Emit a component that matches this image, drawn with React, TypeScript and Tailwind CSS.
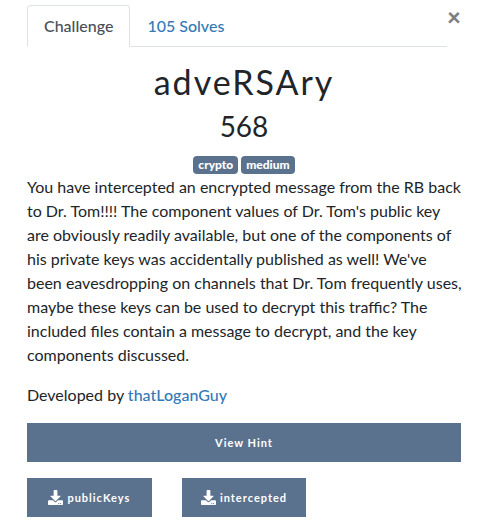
import { FaDownload } from "react-icons/fa";

const tags = ["crypto", "medium"];
const files = ["publicKeys", "intercepted"];

export default function App() {
  return (
    <main className="bg-white pt-[5px] pr-[17px] pb-2 pl-[27px] font-['Lato',sans-serif] text-base text-[#212529]">
      <div className="flex items-start">
        <nav className="flex grow border-b border-[#dee2e6]" role="tablist">
          <button
            type="button"
            role="tab"
            aria-selected="true"
            className="-mb-px rounded-t border border-[#dee2e6] border-b-white bg-white px-4 py-2 font-medium text-[#495057]"
          >
            Challenge
          </button>
          <button
            type="button"
            role="tab"
            aria-selected="false"
            className="-mb-px border border-transparent px-4 py-2 font-medium text-[#337ab7]"
          >
            105 Solves
          </button>
        </nav>
        <button type="button" aria-label="Close" className="w-[14px] text-2xl leading-6 font-black text-[#7f7f7f]">
          ×
        </button>
      </div>

      <h2 className="mt-[15px] text-center text-[34px] leading-10 tracking-[2px]">adveRSAry</h2>
      <h3 className="mt-1 text-center text-[28px] leading-10">568</h3>
      <div className="mt-[10px] flex justify-center gap-[3px]">
        {tags.map((tag) => (
          <span key={tag} className="rounded bg-[#5b728f] px-[5px] py-px text-xs leading-4 font-black text-white">
            {tag}
          </span>
        ))}
      </div>

      <p className="mt-px leading-6 whitespace-nowrap">
        You have intercepted an encrypted message from the RB back
        <br />
        to Dr. Tom!!!! The component values of Dr. Tom's public key
        <br />
        are obviously readily available, but one of the components of
        <br />
        his private keys was accidentally published as well! We've
        <br />
        been eavesdropping on channels that Dr. Tom frequently uses,
        <br />
        maybe these keys can be used to decrypt this traffic? The
        <br />
        included files contain a message to decrypt, and the key
        <br />
        components discussed.
      </p>
      <p className="mt-4 leading-6">
        Developed by{" "}
        <a href="#author" className="font-medium text-[#337ab7]">
          thatLoganGuy
        </a>
      </p>

      <button
        type="button"
        className="mt-4 flex h-[39px] w-full items-center justify-center bg-[#5b728f] pt-[2px] text-[11px] font-bold tracking-[1px] text-white"
      >
        View Hint
      </button>
      <div className="mt-4 grid grid-cols-3 gap-[30px]">
        {files.map((file) => (
          <a
            key={file}
            href={`#${file}`}
            className="flex h-[39px] items-center justify-center gap-1 bg-[#5b728f] pt-[2px] text-[11px] font-bold tracking-[1px] text-white"
          >
            <FaDownload className="mb-[2px] size-[15px]" />
            {file}
          </a>
        ))}
      </div>
    </main>
  );
}
